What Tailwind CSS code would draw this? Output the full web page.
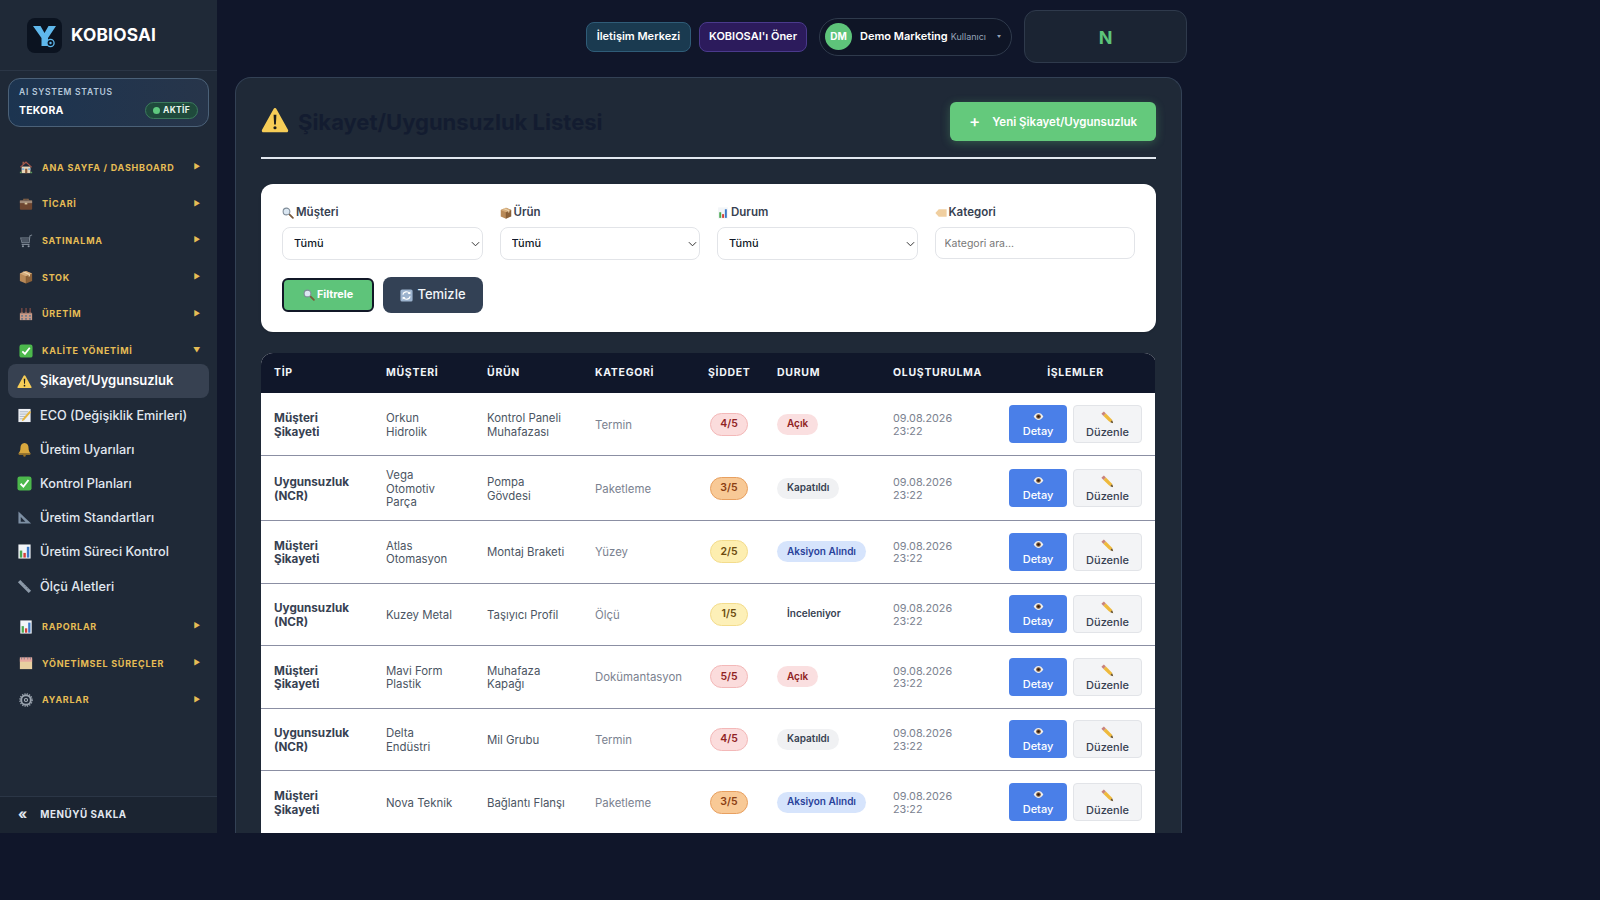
<!DOCTYPE html>
<html lang="tr">
<head>
    <meta charset="UTF-8">
    <meta name="viewport" content="width=device-width, initial-scale=1.0">
    <title>KOBIOSAI - Şikayet/Uygunsuzluk Listesi</title>
    <script src="https://cdn.jsdelivr.net/npm/@tailwindcss/browser@4"></script>
</head>
<body class="bg-[#10162a] h-screen overflow-hidden font-['Inter',sans-serif]">
    <!-- icons -->
    <svg class="hidden">
        <symbol id="i-home" viewBox="0 0 16 16"><path d="M3 7.500h10V15H3z" fill="#e8d5b8"/><path d="M1 8l7-6.500L15 8l-1 .6L8 3.400 2 8.600z" fill="#a8574a"/><path d="M4 2h2v2L4 5.500z" fill="#9a5a4a"/><path d="M7 10h2.500v5H7z" fill="#8a5a3c"/><path d="M3.500 9.500h2.500v2H3.500zM10.500 9.500H13v2h-2.500z" fill="#7fb2d8"/><path d="M1 13.500h2V15H1zM13 13.500h2V15h-2z" fill="#5c9a5a"/></symbol>
        <symbol id="i-case" viewBox="0 0 16 16"><path d="M5.500 4V2.500h5V4" fill="none" stroke="#8f6a4a" stroke-width="1.200"/><rect x="1" y="4" width="14" height="10.500" rx="1.200" fill="#6e4630"/><rect x="1" y="4" width="14" height="3" fill="#a08a78"/><rect x="6.500" y="6.500" width="3" height="2" fill="#d8c49a"/></symbol>
        <symbol id="i-cart" viewBox="0 0 16 16"><path d="M15 1l-2.500 1-1 8H3.500L2 4.500h9.500" fill="none" stroke="#7f8a96" stroke-width="1.200"/><path d="M2.500 5h9l-.8 4.200H3.500z" fill="#4b5563"/><path d="M3 12h9" stroke="#8b95a1" stroke-width="1"/><circle cx="4.500" cy="14" r="1.200" fill="#8b95a1"/><circle cx="11" cy="14" r="1.200" fill="#8b95a1"/></symbol>
        <symbol id="i-box" viewBox="0 0 16 16"><path d="M8 1l7 3v8.500L8 15.500z" fill="#8c6239"/><path d="M8 1L1 4v8.500l7 3z" fill="#b98a58"/><path d="M1 4l7 3 7-3-7-3z" fill="#d6ad7c"/><path d="M8 7v8.500" stroke="#6e4a29" stroke-width=".4"/><path d="M4 2.400l7 3v2.200l1.500-.6V4.800L5.500 1.800z" fill="#efd9b4"/></symbol>
        <symbol id="i-factory" viewBox="0 0 16 16"><path d="M1 7h14v8H1z" fill="#c99a86"/><path d="M1 7l2.300-2 2.300 2 2.400-2 2.300 2 2.400-2L15 7z" fill="#8a6a60"/><path d="M2.500 1h1.500v5H2.500zM7.300 1h1.500v5H7.300zM12 1h1.500v5H12z" fill="#7c4a44"/><path d="M2.500 9h2v2h-2zM7 9h2v2H7zM11.500 9h2v2h-2zM2.500 12.500h2v2h-2zM7 12.500h2v2H7zM11.500 12.500h2v2h-2z" fill="#6b7a8c"/></symbol>
        <symbol id="i-check" viewBox="0 0 16 16"><rect x=".5" y=".5" width="15" height="15" rx="2.500" fill="#4cb84c"/><path d="M3.800 8.300l3 3 5.500-7" fill="none" stroke="#fff" stroke-width="2"/></symbol>
        <symbol id="i-warn" viewBox="0 0 16 16"><path d="M8 1.200c.4 0 .7.200.9.600l6.500 11.700c.4.700 0 1.500-.9 1.500h-13c-.9 0-1.300-.8-.9-1.500L7.100 1.800c.2-.4.500-.6.900-.6z" fill="#f6cd57"/><path d="M7.200 5h1.600l-.3 5.500h-1z" fill="#1c1c1c"/><circle cx="8" cy="12.400" r=".9" fill="#1c1c1c"/></symbol>
        <symbol id="i-memo" viewBox="0 0 16 16"><path d="M1.500 1h13v14h-13z" fill="#eceff3"/><path d="M3 4h9M3 6.500h9M3 9h6M3 11.500h4" stroke="#9aa7b6" stroke-width=".8"/><path d="M13.500 3l1.500 1.500-7.500 8.500-2.500 1 1-2.500z" fill="#e5b53c"/></symbol>
        <symbol id="i-bell" viewBox="0 0 16 16"><path d="M8 1c3 0 4.300 2.300 4.300 5 0 3 1 4.700 2.200 6H1.500C2.700 10.700 3.700 9 3.700 6c0-2.700 1.300-5 4.300-5z" fill="#d9a83e"/><path d="M1.500 12h13l-.5 1.500H2z" fill="#b0842c"/><circle cx="8" cy="14.500" r="1.300" fill="#9a7224"/></symbol>
        <symbol id="i-tri" viewBox="0 0 16 16"><path d="M1.500 1.500L15 14.500H1.500z" fill="#7d8fa3"/><path d="M4 7.500l5 5H4z" fill="#1f2937"/></symbol>
        <symbol id="i-chart" viewBox="0 0 16 16"><rect x="1.500" y=".5" width="13" height="15" fill="#f2f5f8"/><rect x="3" y="7" width="2.600" height="7.500" fill="#4aa94f"/><rect x="6.800" y="9.500" width="2.600" height="5" fill="#d3413a"/><rect x="10.500" y="3" width="2.600" height="11.500" fill="#3b79c9"/></symbol>
        <symbol id="i-ruler" viewBox="0 0 16 16"><path d="M3.500 1L15 12.500 12.500 15 1 3.500z" fill="#8d9aa9"/><path d="M5 4.500l1-1M7 6.500l1-1M9 8.500l1-1M11 10.500l1-1" stroke="#56606c" stroke-width=".7"/></symbol>
        <symbol id="i-index" viewBox="0 0 16 16"><rect x="1" y="3" width="14" height="12" fill="#e9cfa0"/><rect x="1" y="1.500" width="14" height="5" fill="#e8a9a0"/><path d="M3 1v3M6 1v3M10 1v3M13 1v3" stroke="#6b7280" stroke-width=".8"/></symbol>
        <symbol id="i-gear" viewBox="0 0 16 16"><circle cx="8" cy="8" r="5.500" fill="none" stroke="#9aa3ae" stroke-width="2.200"/><circle cx="8" cy="8" r="7" fill="none" stroke="#9aa3ae" stroke-width="1.600" stroke-dasharray="1.400 1.350"/><circle cx="8" cy="8" r="1.800" fill="none" stroke="#aab2bc" stroke-width="1.200"/></symbol>
        <symbol id="i-search" viewBox="0 0 16 16"><path d="M9.500 9.500L14.500 14.500" stroke="#7a5a3c" stroke-width="2.400" stroke-linecap="round"/><circle cx="6" cy="6" r="4.500" fill="#dbe7f2" stroke="#7e8b98" stroke-width="1.400"/></symbol>
        <symbol id="i-tag" viewBox="0 0 16 16"><path d="M5 3h10.500v10H5L.5 8z" fill="#f0cfa0"/></symbol>
        <symbol id="i-refresh" viewBox="0 0 16 16"><rect x=".5" y=".5" width="15" height="15" rx="2" fill="#9db3ce"/><path d="M3.500 7a4.600 4.600 0 0 1 8.200-1.700M12.500 9a4.600 4.600 0 0 1-8.200 1.700" fill="none" stroke="#fff" stroke-width="1.500"/><path d="M12.800 2.800v3.400H9.400zM3.200 13.200V9.800h3.400z" fill="#fff"/></symbol>
        <symbol id="i-eye" viewBox="0 0 16 12"><path d="M1 6c2-3.500 4.400-5 7-5s5 1.500 7 5c-2 3.500-4.400 5-7 5S3 9.500 1 6z" fill="#f2f0ec"/><circle cx="8" cy="6" r="3.400" fill="#7a5230"/><circle cx="8" cy="6" r="1.600" fill="#1e1610"/></symbol>
        <symbol id="i-pencil" viewBox="0 0 16 16"><path d="M.5 3.500l3-3L6 3l-3 3z" fill="#c9837c"/><path d="M3 6l3-3 7 7 2 5-5-2z" fill="#eeb93c"/><path d="M11.500 13.700l3.500 1.300-1.300-3.500z" fill="#57493a"/></symbol>
        <symbol id="i-chev" viewBox="0 0 10 6"><path d="M1 1l4 4 4-4" fill="none" stroke="#333" stroke-width="1.100"/></symbol>
    </svg>

    <div class="w-[1187px] h-[833px] flex overflow-hidden">
        <!-- sidebar -->
        <aside class="w-[217px] shrink-0 bg-[#1f2937] flex flex-col">
            <div class="h-[71px] border-b border-[#2b3646] flex items-center gap-[9px] pl-[27px]">
                <div class="w-[35px] h-[35px] rounded-lg bg-[#0b1320] flex items-center justify-center">
                    <svg class="w-[25px] h-[25px]" viewBox="0 0 25 25"><path d="M1 3h7.500l4 7 4-7H24l-8 12v8H9.500v-8z" fill="#5fb8ec"/><circle cx="18.500" cy="20" r="3.600" fill="#0b1320" stroke="#5fb8ec" stroke-width="1.300"/><circle cx="18.500" cy="20" r="1.200" fill="#5fb8ec"/></svg>
                </div>
                <span class="text-white font-bold text-[17.300px] tracking-[0.2px]">KOBIOSAI</span>
            </div>
            <div class="mx-2 mt-[7px] h-[49px] rounded-xl border border-[#4b6178] bg-gradient-to-r from-[#1c3450] to-[#27354a] px-[10px] pt-[8px] shrink-0">
                <div class="text-[#b6c8da] text-[8.500px] font-semibold tracking-[0.75px] leading-[11px]">AI SYSTEM STATUS</div>
                <div class="flex items-center justify-between mt-[4px]">
                    <span class="text-white text-[10.500px] font-bold tracking-[0.2px]">TEKORA</span>
                    <span class="flex items-center gap-[3px] h-[17px] px-[7px] rounded-full bg-[#1f4a3c] border border-[#3b7a5c] text-[#e8f5ec] text-[8.500px] font-bold tracking-[0.3px]"><span class="w-[7px] h-[7px] rounded-full bg-[#5fc97f]"></span>AKTİF</span>
                </div>
            </div>

            <nav class="mt-[22px] text-[#e6bd55] text-[9px] font-bold tracking-[0.75px]">
                <div class="h-[36.700px] flex items-center pl-[19px] pr-[16px] gap-[3px]"><svg class="w-[14px] h-[14px] mr-[6px]"><use href="#i-home"/></svg><span class="flex-1">ANA SAYFA / DASHBOARD</span><span class="text-[7px]">▶</span></div>
                <div class="h-[36.700px] flex items-center pl-[19px] pr-[16px] gap-[3px]"><svg class="w-[14px] h-[14px] mr-[6px]"><use href="#i-case"/></svg><span class="flex-1">TİCARİ</span><span class="text-[7px]">▶</span></div>
                <div class="h-[36.700px] flex items-center pl-[19px] pr-[16px] gap-[3px]"><svg class="w-[14px] h-[14px] mr-[6px]"><use href="#i-cart"/></svg><span class="flex-1">SATINALMA</span><span class="text-[7px]">▶</span></div>
                <div class="h-[36.700px] flex items-center pl-[19px] pr-[16px] gap-[3px]"><svg class="w-[14px] h-[14px] mr-[6px]"><use href="#i-box"/></svg><span class="flex-1">STOK</span><span class="text-[7px]">▶</span></div>
                <div class="h-[36.700px] flex items-center pl-[19px] pr-[16px] gap-[3px]"><svg class="w-[14px] h-[14px] mr-[6px]"><use href="#i-factory"/></svg><span class="flex-1">ÜRETİM</span><span class="text-[7px]">▶</span></div>
                <div class="h-[36.700px] flex items-center pl-[19px] pr-[16px] gap-[3px]"><svg class="w-[14px] h-[14px] mr-[6px]"><use href="#i-check"/></svg><span class="flex-1">KALİTE YÖNETİMİ</span><span class="text-[7px]">▼</span></div>

                <div class="-mt-[5px] text-[#e2e8f0] text-[12.700px] font-medium tracking-normal">
                    <div class="mx-2 h-[34px] rounded-lg bg-[#374151] flex items-center pl-[9px] gap-[8px] text-white text-[13px] font-semibold"><svg class="w-[15px] h-[15px]"><use href="#i-warn"/></svg>Şikayet/Uygunsuzluk</div>
                    <div class="mx-2 h-[34.200px] flex items-center pl-[9px] gap-[8px]"><svg class="w-[15px] h-[15px]"><use href="#i-memo"/></svg>ECO (Değişiklik Emirleri)</div>
                    <div class="mx-2 h-[34.200px] flex items-center pl-[9px] gap-[8px]"><svg class="w-[15px] h-[15px]"><use href="#i-bell"/></svg>Üretim Uyarıları</div>
                    <div class="mx-2 h-[34.200px] flex items-center pl-[9px] gap-[8px]"><svg class="w-[15px] h-[15px]"><use href="#i-check"/></svg>Kontrol Planları</div>
                    <div class="mx-2 h-[34.200px] flex items-center pl-[9px] gap-[8px]"><svg class="w-[15px] h-[15px]"><use href="#i-tri"/></svg>Üretim Standartları</div>
                    <div class="mx-2 h-[34.200px] flex items-center pl-[9px] gap-[8px]"><svg class="w-[15px] h-[15px]"><use href="#i-chart"/></svg>Üretim Süreci Kontrol</div>
                    <div class="mx-2 h-[34.200px] flex items-center pl-[9px] gap-[8px]"><svg class="w-[15px] h-[15px]"><use href="#i-ruler"/></svg>Ölçü Aletleri</div>
                </div>

                <div class="mt-[5px] h-[36.700px] flex items-center pl-[19px] pr-[16px] gap-[3px]"><svg class="w-[14px] h-[14px] mr-[6px]"><use href="#i-chart"/></svg><span class="flex-1">RAPORLAR</span><span class="text-[7px]">▶</span></div>
                <div class="h-[36.700px] flex items-center pl-[19px] pr-[16px] gap-[3px]"><svg class="w-[14px] h-[14px] mr-[6px]"><use href="#i-index"/></svg><span class="flex-1">YÖNETİMSEL SÜREÇLER</span><span class="text-[7px]">▶</span></div>
                <div class="h-[36.700px] flex items-center pl-[19px] pr-[16px] gap-[3px]"><svg class="w-[14px] h-[14px] mr-[6px]"><use href="#i-gear"/></svg><span class="flex-1">AYARLAR</span><span class="text-[7px]">▶</span></div>
            </nav>

            <div class="mt-auto h-[37px] border-t border-[#2b3646] bg-[#1b2431] flex items-center pl-[18px] gap-[13px] text-[#e2e8f0] text-[9.800px] font-bold tracking-[0.55px]">
                <span class="text-[14px] leading-none font-bold tracking-normal -mt-[2px]">«</span>MENÜYÜ SAKLA
            </div>
        </aside>

        <!-- main -->
        <main class="flex-1 min-w-0 flex flex-col pl-[18px]">
            <header class="h-[77px] shrink-0 flex items-start justify-end gap-3 pt-[10px]">
                <div class="flex items-center gap-3 h-[53px]">
                    <div class="flex items-center gap-2">
                        <a class="h-[30px] px-[10px] flex items-center rounded-lg border border-[#2f5c78] bg-[#1a3a50] text-white text-[11px] font-semibold">İletişim Merkezi</a>
                        <a class="h-[30px] px-[9px] flex items-center rounded-lg border border-[#4a3a8c] bg-[#2c1b5c] text-white text-[11px] font-semibold">KOBIOSAI'ı Öner</a>
                    </div>
                    <div class="h-[38px] w-[193px] rounded-full border border-[#2f3a4c] bg-[#0f1526] flex items-center pl-[5px] gap-2">
                        <span class="w-[27px] h-[27px] rounded-full bg-[#5ec47a] text-white text-[10px] font-bold flex items-center justify-center">DM</span>
                        <span class="text-white text-[11px] font-semibold">Demo Marketing</span>
                        <span class="text-[#94a3b8] text-[9px] -ml-[5px]">Kullanıcı</span>
                        <span class="text-[#94a3b8] text-[4px] ml-[3px]">▼</span>
                    </div>
                </div>
                <div class="w-[163px] h-[53px] pt-[1px] rounded-xl border border-[#2f3a4c] bg-[#1b2433] flex items-center justify-center text-[#5ec47a] text-[18px] font-bold">N</div>
            </header>

            <section class="flex-1 min-h-0 overflow-hidden rounded-t-2xl border border-b-0 border-[#334155] bg-[#1f2937] px-[25px] pt-[23px] w-[947px]">
                <div class="flex items-center justify-between h-[40px]">
                    <h1 class="flex items-center gap-[9px] text-[#131c30] text-[22px] font-bold leading-none pt-[2px]">
                        <svg class="w-[28px] h-[28px] -mt-[5px]"><use href="#i-warn"/></svg>Şikayet/Uygunsuzluk Listesi
                    </h1>
                    <button class="w-[206px] h-[39px] rounded-md bg-[#64c97c] shadow-[0_2px_10px_rgba(100,201,124,0.3)] text-white text-[11.500px] font-semibold flex items-center justify-center gap-[12px]"><span class="text-[17px] font-medium leading-none">+</span><span class="mt-[3px]">Yeni Şikayet/Uygunsuzluk</span></button>
                </div>
                <div class="h-[2px] bg-[#e2e8f0] mt-[16px]"></div>

                <div class="mt-[25px] h-[148px] rounded-xl bg-white px-[21px] pt-[21px] shadow-sm">
                    <div class="grid grid-cols-4 gap-x-[17px]">
                        <div>
                            <label class="flex items-center gap-[2px] h-[16px] text-[#374151] text-[11.500px] font-semibold"><svg class="w-[12px] h-[12px]"><use href="#i-search"/></svg>Müşteri</label>
                            <div class="relative mt-[6px]"><select class="appearance-none w-full h-[33px] pl-[11px] rounded-lg border border-[#e2e4e8] bg-white text-[11px] font-medium text-[#111827]"><option>Tümü</option></select><svg class="absolute right-[3px] top-[14px] w-[9px] h-[6px]"><use href="#i-chev"/></svg></div>
                        </div>
                        <div>
                            <label class="flex items-center gap-[2px] h-[16px] text-[#374151] text-[11.500px] font-semibold"><svg class="w-[12px] h-[12px]"><use href="#i-box"/></svg>Ürün</label>
                            <div class="relative mt-[6px]"><select class="appearance-none w-full h-[33px] pl-[11px] rounded-lg border border-[#e2e4e8] bg-white text-[11px] font-medium text-[#111827]"><option>Tümü</option></select><svg class="absolute right-[3px] top-[14px] w-[9px] h-[6px]"><use href="#i-chev"/></svg></div>
                        </div>
                        <div>
                            <label class="flex items-center gap-[2px] h-[16px] text-[#374151] text-[11.500px] font-semibold"><svg class="w-[12px] h-[12px]"><use href="#i-chart"/></svg>Durum</label>
                            <div class="relative mt-[6px]"><select class="appearance-none w-full h-[33px] pl-[11px] rounded-lg border border-[#e2e4e8] bg-white text-[11px] font-medium text-[#111827]"><option>Tümü</option></select><svg class="absolute right-[3px] top-[14px] w-[9px] h-[6px]"><use href="#i-chev"/></svg></div>
                        </div>
                        <div>
                            <label class="flex items-center gap-[2px] h-[16px] text-[#374151] text-[11.500px] font-semibold"><svg class="w-[12px] h-[12px]"><use href="#i-tag"/></svg>Kategori</label>
                            <input placeholder="Kategori ara..." class="mt-[6px] w-full h-[32px] px-[9px] rounded-lg border border-[#e2e4e8] bg-white text-[10.500px] placeholder:text-[#777]">
                        </div>
                    </div>
                    <div class="flex items-center gap-[9px] mt-[17px]">
                        <button class="w-[92px] h-[34px] rounded-md border-2 border-[#111827] bg-[#5ec47a] text-white text-[10.800px] font-bold flex items-center justify-center gap-[2px]"><svg class="w-[12px] h-[12px]"><use href="#i-search"/></svg>Filtrele</button>
                        <button class="w-[100px] h-[36px] rounded-lg bg-[#334155] text-[#f1f5f9] text-[13px] font-medium flex items-center justify-center gap-[4px]"><svg class="w-[13px] h-[13px]"><use href="#i-refresh"/></svg>Temizle</button>
                    </div>
                </div>

                <div class="mt-[21px] rounded-t-xl overflow-hidden">
                    <table class="w-[894px] table-fixed bg-white text-[11.400px] leading-[13.700px] text-[#4b5563]">
                        <thead class="bg-[#10172a] text-[#f1f5f9] text-[10.500px] font-bold tracking-[0.7px]">
                            <tr class="h-[40px]">
                                <th class="w-[112px] text-left pl-[13px] font-bold">TİP</th>
                                <th class="w-[101px] text-left pl-[13px] font-bold">MÜŞTERİ</th>
                                <th class="w-[108px] text-left pl-[13px] font-bold">ÜRÜN</th>
                                <th class="w-[113px] text-left pl-[13px] font-bold">KATEGORİ</th>
                                <th class="w-[69px] text-left pl-[13px] font-bold">ŞİDDET</th>
                                <th class="w-[116px] text-left pl-[13px] font-bold">DURUM</th>
                                <th class="w-[116px] text-left pl-[13px] font-bold">OLUŞTURULMA</th>
                                <th class="text-center font-bold">İŞLEMLER</th>
                            </tr>
                        </thead>
                        <tbody>
                            <tr class="h-[62.500px] border-b border-[#8b8fa3]">
                                <td class="pl-[13px] pr-[13px] pt-[3px] text-[11.700px] font-bold text-[#374151]">Müşteri Şikayeti</td>
                                <td class="pl-[13px] pr-[16px] pt-[3px]">Orkun Hidrolik</td>
                                <td class="pl-[13px] pr-2 pt-[3px]">Kontrol Paneli Muhafazası</td>
                                <td class="pl-[13px] pr-2 pt-[3px] text-[#7b8290]">Termin</td>
                                <td class="pl-[15px]"><span class="inline-flex items-center justify-center w-[38px] h-[23px] rounded-full border border-[#f3b8b8] bg-[#fbdcdc] text-[#8f2222] text-[10.500px] font-semibold">4/5</span></td>
                                <td class="pl-[13px]"><span class="inline-flex items-center h-[21px] px-[10px] rounded-full bg-[#fadfe0] text-[#8f2222] text-[10px] font-semibold">Açık</span></td>
                                <td class="pl-[13px] pt-[3px] text-[10.800px] leading-[12.700px] text-[#7b8290]">09.08.2026<br>23:22</td>
                                <td><div class="flex gap-[6px] pl-[13px]"><a class="w-[58px] h-[38px] rounded bg-[#4a7fe8] text-white text-[11px] font-medium flex flex-col items-center justify-center pt-[3px]"><svg class="w-[11px] h-[9px] mb-[4px]"><use href="#i-eye"/></svg>Detay</a><a class="w-[69px] h-[38px] rounded border border-[#e2e4e8] bg-[#f3f4f6] text-[#374151] text-[11px] font-medium flex flex-col items-center justify-center pt-[3px]"><svg class="w-[13px] h-[13px] mb-[2px]"><use href="#i-pencil"/></svg>Düzenle</a></div></td>
                            </tr>
                            <tr class="h-[65px] border-b border-[#8b8fa3]">
                                <td class="pl-[13px] pr-[13px] pt-[3px] text-[11.700px] font-bold text-[#374151]">Uygunsuzluk (NCR)</td>
                                <td class="pl-[13px] pr-[16px] pt-[3px]">Vega Otomotiv Parça</td>
                                <td class="pl-[13px] pr-2 pt-[3px]">Pompa<br>Gövdesi</td>
                                <td class="pl-[13px] pr-2 pt-[3px] text-[#7b8290]">Paketleme</td>
                                <td class="pl-[15px]"><span class="inline-flex items-center justify-center w-[38px] h-[23px] rounded-full border border-[#e8a060] bg-[#f8c996] text-[#8a3d12] text-[10.500px] font-semibold">3/5</span></td>
                                <td class="pl-[13px]"><span class="inline-flex items-center h-[21px] px-[10px] rounded-full bg-[#f0f1f3] text-[#374151] text-[10px] font-semibold">Kapatıldı</span></td>
                                <td class="pl-[13px] pt-[3px] text-[10.800px] leading-[12.700px] text-[#7b8290]">09.08.2026<br>23:22</td>
                                <td><div class="flex gap-[6px] pl-[13px]"><a class="w-[58px] h-[38px] rounded bg-[#4a7fe8] text-white text-[11px] font-medium flex flex-col items-center justify-center pt-[3px]"><svg class="w-[11px] h-[9px] mb-[4px]"><use href="#i-eye"/></svg>Detay</a><a class="w-[69px] h-[38px] rounded border border-[#e2e4e8] bg-[#f3f4f6] text-[#374151] text-[11px] font-medium flex flex-col items-center justify-center pt-[3px]"><svg class="w-[13px] h-[13px] mb-[2px]"><use href="#i-pencil"/></svg>Düzenle</a></div></td>
                            </tr>
                            <tr class="h-[62.500px] border-b border-[#8b8fa3]">
                                <td class="pl-[13px] pr-[13px] pt-[3px] text-[11.700px] font-bold text-[#374151]">Müşteri Şikayeti</td>
                                <td class="pl-[13px] pr-[16px] pt-[3px]">Atlas Otomasyon</td>
                                <td class="pl-[13px] pr-2 pt-[3px]">Montaj Braketi</td>
                                <td class="pl-[13px] pr-2 pt-[3px] text-[#7b8290]">Yüzey</td>
                                <td class="pl-[15px]"><span class="inline-flex items-center justify-center w-[38px] h-[23px] rounded-full border border-[#f3dc8c] bg-[#fdeeb0] text-[#6b4a0e] text-[10.500px] font-semibold">2/5</span></td>
                                <td class="pl-[13px]"><span class="inline-flex items-center h-[21px] px-[10px] rounded-full bg-[#d6e4fc] text-[#28419a] text-[10px] font-semibold whitespace-nowrap">Aksiyon Alındı</span></td>
                                <td class="pl-[13px] pt-[3px] text-[10.800px] leading-[12.700px] text-[#7b8290]">09.08.2026<br>23:22</td>
                                <td><div class="flex gap-[6px] pl-[13px]"><a class="w-[58px] h-[38px] rounded bg-[#4a7fe8] text-white text-[11px] font-medium flex flex-col items-center justify-center pt-[3px]"><svg class="w-[11px] h-[9px] mb-[4px]"><use href="#i-eye"/></svg>Detay</a><a class="w-[69px] h-[38px] rounded border border-[#e2e4e8] bg-[#f3f4f6] text-[#374151] text-[11px] font-medium flex flex-col items-center justify-center pt-[3px]"><svg class="w-[13px] h-[13px] mb-[2px]"><use href="#i-pencil"/></svg>Düzenle</a></div></td>
                            </tr>
                            <tr class="h-[62.500px] border-b border-[#8b8fa3]">
                                <td class="pl-[13px] pr-[13px] pt-[3px] text-[11.700px] font-bold text-[#374151]">Uygunsuzluk (NCR)</td>
                                <td class="pl-[13px] pr-[16px] pt-[3px]">Kuzey Metal</td>
                                <td class="pl-[13px] pr-2 pt-[3px]">Taşıyıcı Profil</td>
                                <td class="pl-[13px] pr-2 pt-[3px] text-[#7b8290]">Ölçü</td>
                                <td class="pl-[15px]"><span class="inline-flex items-center justify-center w-[38px] h-[23px] rounded-full border border-[#f3dc8c] bg-[#fdf0b8] text-[#6b4a0e] text-[10.500px] font-semibold">1/5</span></td>
                                <td class="pl-[13px]"><span class="inline-flex items-center h-[21px] px-[10px] rounded-full bg-white text-[#374151] text-[10px] font-semibold">İnceleniyor</span></td>
                                <td class="pl-[13px] pt-[3px] text-[10.800px] leading-[12.700px] text-[#7b8290]">09.08.2026<br>23:22</td>
                                <td><div class="flex gap-[6px] pl-[13px]"><a class="w-[58px] h-[38px] rounded bg-[#4a7fe8] text-white text-[11px] font-medium flex flex-col items-center justify-center pt-[3px]"><svg class="w-[11px] h-[9px] mb-[4px]"><use href="#i-eye"/></svg>Detay</a><a class="w-[69px] h-[38px] rounded border border-[#e2e4e8] bg-[#f3f4f6] text-[#374151] text-[11px] font-medium flex flex-col items-center justify-center pt-[3px]"><svg class="w-[13px] h-[13px] mb-[2px]"><use href="#i-pencil"/></svg>Düzenle</a></div></td>
                            </tr>
                            <tr class="h-[62.500px] border-b border-[#8b8fa3]">
                                <td class="pl-[13px] pr-[13px] pt-[3px] text-[11.700px] font-bold text-[#374151]">Müşteri Şikayeti</td>
                                <td class="pl-[13px] pr-[16px] pt-[3px]">Mavi Form Plastik</td>
                                <td class="pl-[13px] pr-2 pt-[3px]">Muhafaza Kapağı</td>
                                <td class="pl-[13px] pr-2 pt-[3px] text-[#7b8290]">Dokümantasyon</td>
                                <td class="pl-[15px]"><span class="inline-flex items-center justify-center w-[38px] h-[23px] rounded-full border border-[#f3b8b8] bg-[#fbdcdc] text-[#8f2222] text-[10.500px] font-semibold">5/5</span></td>
                                <td class="pl-[13px]"><span class="inline-flex items-center h-[21px] px-[10px] rounded-full bg-[#fadfe0] text-[#8f2222] text-[10px] font-semibold">Açık</span></td>
                                <td class="pl-[13px] pt-[3px] text-[10.800px] leading-[12.700px] text-[#7b8290]">09.08.2026<br>23:22</td>
                                <td><div class="flex gap-[6px] pl-[13px]"><a class="w-[58px] h-[38px] rounded bg-[#4a7fe8] text-white text-[11px] font-medium flex flex-col items-center justify-center pt-[3px]"><svg class="w-[11px] h-[9px] mb-[4px]"><use href="#i-eye"/></svg>Detay</a><a class="w-[69px] h-[38px] rounded border border-[#e2e4e8] bg-[#f3f4f6] text-[#374151] text-[11px] font-medium flex flex-col items-center justify-center pt-[3px]"><svg class="w-[13px] h-[13px] mb-[2px]"><use href="#i-pencil"/></svg>Düzenle</a></div></td>
                            </tr>
                            <tr class="h-[62.500px] border-b border-[#8b8fa3]">
                                <td class="pl-[13px] pr-[13px] pt-[3px] text-[11.700px] font-bold text-[#374151]">Uygunsuzluk (NCR)</td>
                                <td class="pl-[13px] pr-[16px] pt-[3px]">Delta Endüstri</td>
                                <td class="pl-[13px] pr-2 pt-[3px]">Mil Grubu</td>
                                <td class="pl-[13px] pr-2 pt-[3px] text-[#7b8290]">Termin</td>
                                <td class="pl-[15px]"><span class="inline-flex items-center justify-center w-[38px] h-[23px] rounded-full border border-[#f3b8b8] bg-[#fbdcdc] text-[#8f2222] text-[10.500px] font-semibold">4/5</span></td>
                                <td class="pl-[13px]"><span class="inline-flex items-center h-[21px] px-[10px] rounded-full bg-[#f0f1f3] text-[#374151] text-[10px] font-semibold">Kapatıldı</span></td>
                                <td class="pl-[13px] pt-[3px] text-[10.800px] leading-[12.700px] text-[#7b8290]">09.08.2026<br>23:22</td>
                                <td><div class="flex gap-[6px] pl-[13px]"><a class="w-[58px] h-[38px] rounded bg-[#4a7fe8] text-white text-[11px] font-medium flex flex-col items-center justify-center pt-[3px]"><svg class="w-[11px] h-[9px] mb-[4px]"><use href="#i-eye"/></svg>Detay</a><a class="w-[69px] h-[38px] rounded border border-[#e2e4e8] bg-[#f3f4f6] text-[#374151] text-[11px] font-medium flex flex-col items-center justify-center pt-[3px]"><svg class="w-[13px] h-[13px] mb-[2px]"><use href="#i-pencil"/></svg>Düzenle</a></div></td>
                            </tr>
                            <tr class="h-[62.500px]">
                                <td class="pl-[13px] pr-[13px] pt-[3px] text-[11.700px] font-bold text-[#374151]">Müşteri Şikayeti</td>
                                <td class="pl-[13px] pr-[16px] pt-[3px]">Nova Teknik</td>
                                <td class="pl-[13px] pr-2 pt-[3px]">Bağlantı Flanşı</td>
                                <td class="pl-[13px] pr-2 pt-[3px] text-[#7b8290]">Paketleme</td>
                                <td class="pl-[15px]"><span class="inline-flex items-center justify-center w-[38px] h-[23px] rounded-full border border-[#e8a060] bg-[#f8c996] text-[#8a3d12] text-[10.500px] font-semibold">3/5</span></td>
                                <td class="pl-[13px]"><span class="inline-flex items-center h-[21px] px-[10px] rounded-full bg-[#d6e4fc] text-[#28419a] text-[10px] font-semibold whitespace-nowrap">Aksiyon Alındı</span></td>
                                <td class="pl-[13px] pt-[3px] text-[10.800px] leading-[12.700px] text-[#7b8290]">09.08.2026<br>23:22</td>
                                <td><div class="flex gap-[6px] pl-[13px]"><a class="w-[58px] h-[38px] rounded bg-[#4a7fe8] text-white text-[11px] font-medium flex flex-col items-center justify-center pt-[3px]"><svg class="w-[11px] h-[9px] mb-[4px]"><use href="#i-eye"/></svg>Detay</a><a class="w-[69px] h-[38px] rounded border border-[#e2e4e8] bg-[#f3f4f6] text-[#374151] text-[11px] font-medium flex flex-col items-center justify-center pt-[3px]"><svg class="w-[13px] h-[13px] mb-[2px]"><use href="#i-pencil"/></svg>Düzenle</a></div></td>
                            </tr>
                        </tbody>
                    </table>
                </div>
            </section>
        </main>
    </div>
</body>
</html>
